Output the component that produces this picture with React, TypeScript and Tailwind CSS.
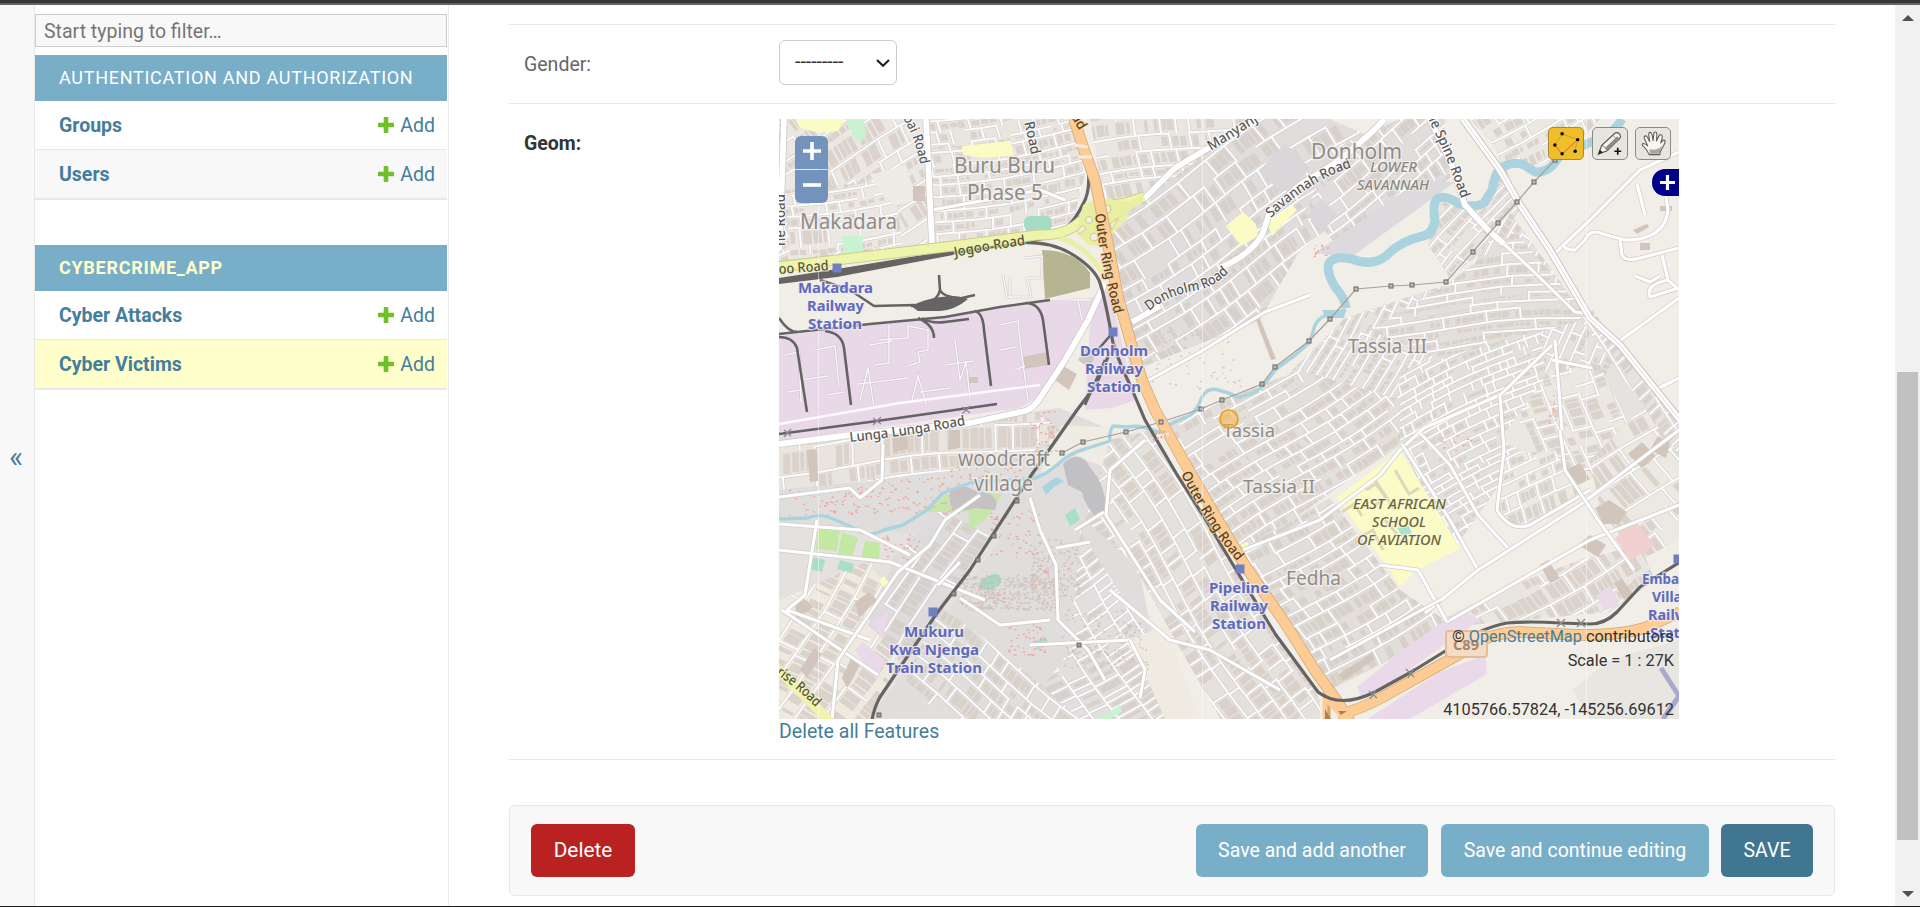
import React from "react";

type Pt = [number, number];

function rng(seed: number) {
  let s = seed;
  return () => {
    s = (s * 1664525 + 1013904223) % 4294967296;
    return s / 4294967296;
  };
}

/* Builds an irregular, slightly curved street grid around a centre point. */
function grid(cx: number, cy: number, angle: number, w: number, h: number, row: number, cell: number, seed: number) {
  const r = rng(seed);
  const a = (angle * Math.PI) / 180;
  const c = Math.cos(a);
  const s = Math.sin(a);
  const p = (x0: number, y0: number) => {
    const x = x0 + 4 * Math.sin(y0 / 31 + seed);
    const y = y0 + 4 * Math.sin(x0 / 43 + seed);
    return `${(cx + x * c - y * s).toFixed(1)} ${(cy + x * s + y * c).toFixed(1)}`;
  };
  let roads = "";
  let houses = "";
  let y = -h / 2;
  while (y < h / 2) {
    const rh = row * (0.7 + r() * 0.7);
    let x = -w / 2;
    while (x < w / 2) {
      const cw = cell * (0.5 + r() * 1.1);
      if (r() > 0.12) roads += `M${p(x, y)}L${p(x + cw, y)}`;
      if (r() > 0.22) roads += `M${p(x, y)}L${p(x, y + rh)}`;
      if (r() > 0.15 && cw > 7) {
        let hx = x + 2.6;
        while (hx < x + cw - 4) {
          const hw = 3 + r() * 6;
          const end = Math.min(hx + hw, x + cw - 2.4);
          const top = y + 2.4 + r() * 1.4;
          const bottom = y + rh - 2.4 - r() * 1.6;
          if (r() > 0.15 && bottom > top) {
            houses += `M${p(hx, top)}L${p(end, top)}L${p(end, bottom)}L${p(hx, bottom)}Z`;
          }
          hx = end + 0.6 + r() * 1.6;
        }
      }
      x += cw;
    }
    y += rh;
  }
  return { roads, houses };
}

interface District {
  id: string;
  area: string;
  fill: string;
  g: [number, number, number, number, number, number, number, number];
}

const districts: District[] = [
  { id: "mak", area: "779,119 925,119 928,248 779,262", fill: "#ebe7e2", g: [850, 190, -30, 280, 260, 16, 36, 3] },
  { id: "mak2", area: "785,190 893,180 903,246 790,256", fill: "#ebe7e2", g: [840, 220, -8, 150, 90, 14, 22, 33] },
  { id: "bur", area: "930,119 1076,119 1086,170 1072,226 1040,234 934,248", fill: "#e9e5e0", g: [1005, 180, -9, 200, 160, 11, 20, 8] },
  { id: "umo", area: "1090,119 1300,119 1140,200 1104,200", fill: "#eae7e3", g: [1170, 160, -8, 260, 110, 14, 21, 12] },
  { id: "don", area: "1255,119 1330,119 1420,158 1300,250 1260,320 1130,372 1108,220 1150,195", fill: "#e0dddc", g: [1240, 240, -34, 420, 330, 15, 26, 22] },
  { id: "don2", area: "1340,145 1400,119 1445,119 1450,178 1346,255 1305,210", fill: "#e0dddc", g: [1385, 180, -38, 200, 160, 12, 23, 9] },
  { id: "ne", area: "1470,119 1600,119 1570,152 1535,166 1502,165 1490,140", fill: "#ece9e3", g: [1530, 130, -28, 180, 100, 12, 22, 2] },
  { id: "spine", area: "1437,200 1480,212 1505,165 1520,210 1490,245 1450,278 1428,245", fill: "#e8e4df", g: [1470, 230, -50, 150, 130, 9, 40, 62] },
  { id: "tas3", area: "1510,212 1660,420 1560,440 1465,360 1395,432 1262,400 1345,318 1460,280", fill: "#e6e2df", g: [1440, 340, -62, 420, 330, 9, 42, 21] },
  { id: "tas3b", area: "1450,282 1515,232 1590,318 1440,360 1370,330", fill: "#e3dfdb", g: [1480, 300, -5, 260, 160, 9, 48, 4] },
  { id: "dense", area: "1400,370 1540,330 1550,405 1510,470 1450,555 1395,430", fill: "#e4e0dc", g: [1470, 430, -25, 260, 250, 8, 15, 17] },
  { id: "tas1", area: "1160,425 1300,370 1400,400 1400,445 1320,500 1240,560 1175,450", fill: "#e3dfdb", g: [1270, 450, -33, 320, 220, 12, 26, 6] },
  { id: "fed", area: "1240,550 1330,498 1400,590 1460,630 1380,665 1330,690", fill: "#e2deda", g: [1340, 600, -32, 260, 220, 14, 25, 7] },
  { id: "pipe", area: "1110,440 1150,430 1320,700 1320,719 1220,719 1130,560 1085,520", fill: "#e5e1dc", g: [1190, 590, 58, 360, 240, 14, 24, 13] },
  { id: "kwen", area: "1080,530 1150,640 1140,660 1175,719 1020,719 1070,650", fill: "#e2dfde", g: [1100, 630, 58, 260, 190, 25, 9, 14] },
  { id: "eleg", area: "1550,370 1600,365 1650,470 1580,480 1500,440", fill: "#ebe8e2", g: [1590, 420, 70, 180, 120, 14, 24, 15] },
  { id: "oval", area: "1505,455 1555,450 1580,490 1560,515 1510,527 1494,510", fill: "#ece9e3", g: [1535, 490, -20, 90, 80, 14, 20, 16] },
  { id: "emb", area: "1590,460 1660,390 1679,410 1679,540 1640,560 1600,510", fill: "#ece8e2", g: [1640, 480, -35, 190, 190, 22, 28, 18] },
  { id: "estr", area: "1580,319 1679,455 1679,420 1592,310", fill: "#e6e2de", g: [1630, 390, 54, 240, 60, 13, 12, 19] },
  { id: "swind", area: "779,600 870,560 910,640 870,719 779,719", fill: "#eeeae0", g: [840, 650, -58, 220, 200, 18, 60, 20] },
  { id: "lun", area: "779,446 1040,412 1060,430 1020,462 880,480 779,490", fill: "#e9e4de", g: [900, 452, -6, 300, 70, 20, 28, 23] },
  { id: "muk", area: "895,555 940,510 990,535 905,660 868,625", fill: "#dddbdc", g: [925, 585, -57, 190, 110, 16, 60, 24] },
  { id: "muk2", area: "940,605 1012,660 1080,719 890,719 915,660", fill: "#e1dedc", g: [990, 670, 38, 230, 130, 13, 24, 25] },
  { id: "indb", area: "1440,620 1500,590 1580,560 1640,545 1655,580 1610,612 1470,625", fill: "#e9e5e0", g: [1540, 600, -30, 240, 90, 17, 30, 26] },
];

const built = districts.map((d) => ({ ...d, ...grid(...d.g) }));

/* Small marks scattered in the informal settlements. */
function specks(boxes: [number, number, number, number, number][], seed: number) {
  const r = rng(seed);
  let d = "";
  boxes.forEach(([x, y, w, h, n]) => {
    for (let i = 0; i < n; i++) {
      const px = x + r() * w;
      const py = y + r() * h;
      d += `M${px.toFixed(1)} ${py.toFixed(1)}l${(1 + r() * 2).toFixed(1)} ${(r() * 2 - 1).toFixed(1)}`;
    }
  });
  return d;
}

const redSpecks = specks(
  [[785, 488, 90, 28, 60], [850, 478, 110, 36, 90], [950, 462, 70, 22, 40], [1030, 412, 25, 40, 34], [880, 535, 40, 26, 30], [990, 510, 50, 50, 50], [960, 585, 60, 20, 20], [1005, 625, 40, 30, 45], [1030, 560, 40, 30, 26], [1312, 243, 15, 14, 12], [1440, 435, 30, 18, 12], [1548, 395, 8, 30, 12]],
  77,
);
const brownSpecks = specks([[960, 575, 95, 35, 420], [1030, 540, 50, 60, 160], [1060, 610, 90, 60, 160], [1150, 330, 90, 60, 50]], 31);

const river =
  "M1622 119Q1616 130 1604 136T1582 146T1560 156L1552 166Q1544 173 1535 172L1524 165Q1512 160 1500 169Q1495 173 1492 190L1484 203Q1474 209 1458 203Q1444 194 1437 199Q1432 204 1435 220Q1433 234 1423 236Q1400 241 1386 256Q1372 267 1352 259Q1335 255 1329 263Q1326 272 1335 287Q1345 298 1346 308";
const stream =
  "M1346 310L1328 314Q1315 319 1313 332L1309 343L1294 356L1276 369L1263 386Q1252 396 1238 397Q1228 392 1218 390Q1208 387 1202 397Q1196 413 1187 417Q1168 424 1158 432Q1140 424 1128 427L1113 426Q1109 431 1110 441L1085 449Q1070 453 1058 464T1032 479Q1000 480 970 483L943 493L927 510L903 525L884 530Q868 538 858 530L838 521Q820 512 808 518L779 519";
const outer = "M1074 119L1084 150L1095 180L1103 220L1111 260L1118 297L1131 343L1142 380L1155 410L1183 460L1216 517L1246 567L1283 620L1316 672L1339 704L1350 722";
const c89 = "M1338 714Q1352 713 1381 698L1449 660Q1467 650 1482 640Q1500 632 1520 632L1580 635Q1625 635 1647 627L1680 612";
const rail =
  "M1076 130L1087 157Q1092 190 1083 204Q1070 232 1047 238L953 253L837 273L779 280M1000 244Q1045 238 1070 253T1100 283T1113 343Q1120 365 1131 387";
const railSE =
  "M1131 387L1145 420L1176 473L1209 525L1238 573L1276 635L1318 692Q1340 709 1375 692L1413 671L1447 650Q1480 628 1507 623Q1530 621 1560 623L1590 624Q1605 624 1617 612L1640 587L1680 562";
const railSW = "M1110 352L1096 385L1077 410L1030 477L970 570L937 613L903 663L880 697Q874 708 872 720";

const whiteRoads = [
  "M1105 283L1088 320L1065 360L1040 398Q1034 408 1025 411L970 423L850 435L779 444",
  "M1132 322L1160 306M1220 268Q1250 255 1262 235L1270 212L1300 185L1340 160L1372 132L1385 119",
  "M1144 199L1175 168L1210 147L1258 119",
  "M926 119L929 180L932 244",
  "M784 119L782 180L779 250",
  "M1430 119L1452 165L1465 205L1490 232L1504 244",
];
const spine = "M1463 119L1500 170L1520 205L1550 250L1590 318L1620 345L1680 420";
const midRoads = [
  "M1504 244L1530 268L1575 312L1590 314",
  "M1552 256L1590 220L1640 170L1679 152",
  "M1618 342L1679 298M1655 390L1679 378",
  "M1140 385L1200 352L1265 312L1310 295",
  "M932 210L1040 190L1065 200",
  "M1243 550L1320 520L1380 475L1400 450L1424 428L1500 395L1552 345",
  "M1402 444L1450 520L1478 570M1420 433L1450 465L1478 515L1508 548",
  "M1425 613L1478 570L1580 505L1679 430M1447 622L1590 540L1679 505",
  "M1380 565L1418 570L1447 622",
  "M1500 395L1504 450L1497 510Q1510 532 1530 525L1590 490",
  "M1560 430L1565 470L1598 520L1634 570",
  "M1555 340L1562 430M1552 360L1592 368",
  "M779 497L850 488L860 498L882 480L883 445",
  "M779 524L860 530L910 555M779 550L890 562L985 600M817 520L805 595L787 610L870 640M782 610L878 675",
  "M980 495L945 520L930 545L898 572L838 660L832 719M938 585L960 562",
  "M1030 498L1040 530L1056 565L1058 620L1088 650L1105 680M960 598L1000 625L1050 620M1056 548L1090 542",
  "M1104 512L1075 530M1106 515L1110 470L1145 440M1106 515L1160 600L1195 632M1030 645L1130 640",
  "M1130 640L1145 670L1140 698",
  "M1603 234Q1590 228 1585 240L1575 250Q1565 250 1564 246M1603 234L1625 240Q1665 240 1668 210L1665 190M1620 240L1622 255Q1625 262 1640 258L1679 248M1637 184L1645 215",
  "M1662 255L1668 280L1679 290M1635 276L1650 282L1660 276M1668 280Q1645 285 1650 297L1679 288",
  "M1110 590L1170 640L1210 650L1280 690",
  "M1330 660L1440 600",
];

const paleBlocks: [string, string][] = [
  ["795,119 845,119 838,131 820,133 800,128", "#fbfbc4"],
  ["845,119 863,119 867,134 861,142 855,139", "#c8f3d1"],
  ["842,236 862,236 863,255 844,256", "#c8f3d1"],
  ["870,175 905,165 915,200 895,206 880,190", "#efece5"],
  ["962,146 1010,141 1014,155 985,158 963,155", "#fbfbc4"],
  ["1226,226 1243,212 1256,224 1258,236 1241,246", "#fbfbc4"],
  ["1267,222 1292,205 1297,210 1272,236", "#fbfbc4"],
  ["1260,170 1285,143 1310,168 1290,190 1280,192", "#d9d7da"],
  ["1308,215 1322,198 1337,215 1322,233", "#d9d7da"],
  ["1315,253 1420,180 1455,182 1350,258", "#dddadd"],
  ["829,528 840,529 837,551 816,549 819,529", "#c3e8a2"],
  ["842,532 858,538 851,560 838,555", "#c3e8a2"],
  ["865,541 880,543 879,560 861,560", "#c3e8a2"],
  ["925,512 945,495 975,490 1002,495 985,520 970,530 968,512", "#c8e6ac"],
  ["811,557 825,560 822,572 809,569", "#a9dfc8"],
  ["840,560 854,564 851,573 837,569", "#a9dfc8"],
  ["1065,515 1075,508 1080,520 1070,526", "#a9dfc8"],
  ["1034,643 1044,636 1048,641 1038,650", "#a9dfc8"],
  ["1098,719 1120,705 1122,711 1110,719", "#c8f3d1"],
  ["1241,544 1248,542 1249,548 1243,550", "#fbfbc4"],
  ["878,580 884,576 890,584 884,587", "#fbfbc4"],
  ["1337,497 1383,463 1400,450 1460,548 1413,573 1400,587 1390,570 1360,530", "#fbfbc6"],
  ["1397,528 1408,525 1412,533 1402,536", "#a9e3cf"],
  ["1615,538 1635,520 1655,546 1630,560", "#f1d0cf"],
  ["1596,596 1610,586 1620,605 1606,610", "#ead9e9"],
  ["1357,687 1410,645 1460,610 1480,620 1380,690 1362,698", "#ead9e9"],
  ["1367,719 1440,672 1485,655 1487,674 1410,719", "#ead9e9"],
  ["872,623 890,610 882,637", "#ead9e9"],
  ["855,650 862,642 885,660 876,680", "#ead9e9"],
  ["1130,640 1165,625 1200,719 1165,719", "#efebe3"],
  ["1572,690 1610,660 1679,640 1679,719 1590,719", "#e8e6e1"],
];

const brownBuildings =
  "M913 186h12v15h-12zM1022 357l25-5 1 13-24 4zM969 377h9v6h-9zM1566 470l14-7 10 16-12 6zM1628 454l14-12 14 14-14 12zM1650 450l8-14 12 8-4 14zM1595 508l14-8 18 12-8 12-16 0zM1540 565l8-5 12 18-10 5zM1578 545l12-10 16 10-8 12zM1614 583l8-4 12 16-10 5zM1256 320l4-1 16 40-5 1zM1338 675l34-22 3 6-32 22zM1640 243h10v7h-10zM1660 206l12 0 0 5-12 0zM1633 230l14-6 2 3-12 7zM807 450l10-1 1 32-8 1zM892 432l14-3 2 20-14 3zM950 430l10 0 0 18-12 2zM855 602l14-10 8 8-18 18zM795 605l10-6 8 8-16 12zM800 670l14-22 8 6-15 24zM842 678l10-22 10 6-15 26zM1055 380l8-14 14 8-8 16zM1078 360l8-12 10 6-7 14z";

const sidings =
  "M779 334L870 324L945 317L1000 307L1050 300M779 318Q788 332 797 332M779 337Q793 337 797 348L807 412M825 331Q842 333 844 348L851 405M918 318Q934 325 934 338M922 318Q932 324 945 322L969 319M975 311Q983 313 984 330L991 386M1025 303Q1040 303 1043 320L1049 365M820 280L850 290L874 306L915 305M911 306Q950 302 962 298L975 295M939 275L940 290Q938 300 927 303M940 290Q943 297 960 298M779 434L877 421L997 404M1105 360L1085 405M1096 352L1115 330";

const serviceRoads =
  "M785 355l14-3 2 50M815 350l20-4 4 40M870 345l22-4M889 325l0 38-14 2M880 340l28-2v-12l20 4v20l-10 2 2 10-12 4M800 380l28-4M860 400l8-32 6 40M912 400l6-24 8 28M955 340l5 40 6-18 4 36M1000 325l18-4 2 20 8 60M1015 370l10-4M1003 275l4 22h24l-4-20M1010 277v22M1024 258l18-2v22h-14M1070 300l20 0M1078 300l4 20M787 392l14-2M828 395l16-3M858 384l50-6M920 392l30-4M1000 350l16-3M945 365l28-4";

interface LabelProps {
  t: string;
  x: number;
  y: number;
  w: number;
  size?: number;
}

function Place({ t, x, y, w, size = 21 }: LabelProps) {
  return (
    <text x={x} y={y} textLength={w} lengthAdjust="spacingAndGlyphs" fontSize={size} fill="#8f8c8b" stroke="#f4f1ec" strokeWidth={3} strokeOpacity={0.75} paintOrder="stroke">
      {t}
    </text>
  );
}

function Station({ t, x, y, w }: LabelProps) {
  return (
    <text x={x} y={y} textLength={w} lengthAdjust="spacingAndGlyphs" fontSize={15} fontWeight={700} fill="#5f6abd" stroke="#f0edf0" strokeWidth={2.5} strokeOpacity={0.8} paintOrder="stroke">
      {t}
    </text>
  );
}

function Area({ t, x, y, w, fill }: LabelProps & { fill: string }) {
  return (
    <text x={x} y={y} textLength={w} lengthAdjust="spacingAndGlyphs" fontSize={14} fontWeight={500} fontStyle="italic" fill={fill} stroke="#f6f4e4" strokeWidth={2} strokeOpacity={0.7} paintOrder="stroke">
      {t}
    </text>
  );
}

const roadNames: { id: string; d: string; t: string; w: number; c?: string; halo?: string }[] = [
  { id: "r1", d: "M955 257Q990 250 1030 244", t: "Jogoo Road", w: 72, c: "#55553a", halo: "#eff3b4" },
  { id: "r2", d: "M1095 214Q1101 265 1116 320", t: "Outer Ring Road", w: 102, c: "#5a421f", halo: "#fbcf9b" },
  { id: "r3", d: "M1181 474Q1206 525 1241 566", t: "Outer Ring Road", w: 104, c: "#5a421f", halo: "#fbcf9b" },
  { id: "r4", d: "M1149 311Q1170 294 1200 290Q1218 285 1234 267", t: "Donholm Road", w: 90 },
  { id: "r5", d: "M1271 218Q1310 180 1356 166", t: "Savannah Road", w: 96 },
  { id: "r6", d: "M1211 151L1268 115", t: "Manyanj", w: 56 },
  { id: "r7", d: "M1425 112L1445 155L1464 206", t: "ole Spine Road", w: 94 },
  { id: "r8", d: "M850 442Q910 436 970 424", t: "Lunga Lunga Road", w: 117 },
  { id: "r9", d: "M776 674Q800 690 824 716", t: "rise Road", w: 52, c: "#55553a", halo: "#eff3b4" },
  { id: "r10", d: "M779 274L832 270", t: "oo Road", w: 50, c: "#55553a", halo: "#eff3b4" },
  { id: "r11", d: "M903 118Q916 140 921 168", t: "oai Road", w: 50 },
  { id: "r12", d: "M1022 112L1032 158", t: "il Road", w: 44 },
  { id: "r13", d: "M785 246L785 190", t: "ne Road", w: 52 },
  { id: "r14", d: "M1067 110L1080 132", t: "oad", w: 24, c: "#5a421f", halo: "#fbcf9b" },
];

const pylons: Pt[] = [[1555, 160], [1534, 182], [1517, 202], [1498, 223], [1473, 252], [1446, 282], [1412, 285], [1391, 286], [1356, 289], [1330, 319], [1309, 341], [1275, 367], [1262, 384], [1222, 400], [1201, 409], [1161, 422], [1126, 432], [1083, 442], [1062, 453]];
const posts: Pt[] = [[1017, 501], [994, 536], [978, 560], [954, 594], [879, 715], [1079, 645]];
const stations: Pt[] = [[837, 268], [1113, 332], [1240, 569], [933, 612], [1678, 559]];

function CityMap() {
  return (
    <svg className="block h-[600px] w-[900px]" viewBox="779 119 900 600" fontFamily="'Noto Sans', 'Open Sans', sans-serif">
      <rect x="779" y="119" width="900" height="600" fill="#f1eee8" />
      <polygon points="779,446 1060,408 1110,430 1170,719 779,719" fill="#e0dddd" />
      <polygon points="779,336 985,311 1052,300 1085,300 1110,290 1135,400 1112,408 1085,410 1090,322 1040,396 1020,408 779,441" fill="#e9d9e8" />
      <polygon points="779,525 1000,540 870,719 779,719" fill="#e4e1df" />
      <polygon points="1062,425 1150,430 1110,470 1075,455 1040,476 1050,440" fill="#efece4" />
      {built.map((d) => (
        <g key={d.id}>
          <clipPath id={`clip-${d.id}`}>
            <polygon points={d.area} />
          </clipPath>
          <g clipPath={`url(#clip-${d.id})`}>
            <polygon points={d.area} fill={d.fill} />
            <path d={d.houses} fill="#d6cdc6" opacity={0.8} />
            <path d={d.roads} stroke="#cdcaca" strokeWidth={3.4} fill="none" opacity={0.75} />
            <path d={d.roads} stroke="#fcfcfc" strokeWidth={2} fill="none" strokeLinecap="round" />
          </g>
        </g>
      ))}
      {paleBlocks.map(([pts, fill]) => (
        <polygon key={pts} points={pts} fill={fill} />
      ))}
      <path d="M1042 250Q1075 250 1090 273V288L1045 299Z" fill="#b5b592" />
      <rect x="1024" y="216" width="28" height="15" rx="6" fill="#a4dcc6" />
      <rect x="980" y="576" width="21" height="13" rx="6" fill="#a4dcc6" transform="rotate(-25 990 582)" />
      <path d="M1063 464Q1075 452 1085 460L1098 478Q1107 495 1105 512L1095 516Q1085 505 1082 492L1068 485Z" fill="#c1c0c2" />
      <path d="M950 490Q965 483 973 490L990 494Q1000 500 995 510L975 508Q958 514 950 505Z" fill="#c5c2c4" />
      <path d="M1342 512l12-8 8 12M1366 490l10-6 10 14-12 8M1355 540l18-10 10 20M1385 520l12 14M1375 480l20 30M1395 470l14 24 10-6" fill="none" stroke="#ddd8bd" strokeWidth="3" />
      <path d={brownBuildings} fill="#d1c5bc" />
      <path d={brownSpecks} stroke="#c9bcb1" strokeWidth="1.5" fill="none" opacity=".7" />
      <path d={redSpecks} stroke="#f0a8a2" strokeWidth="1.4" fill="none" />

      <path d={river} stroke="#aad3df" strokeWidth="9" fill="none" strokeLinejoin="round" />
      <path d={stream} stroke="#aad3df" strokeWidth="3.4" fill="none" strokeLinejoin="round" />
      <path d="M1322 310h24l-2 8h-18zM1042 487l14-10 8 4-10 6-8 8z" fill="#aad3df" />
      <path d={serviceRoads} stroke="#cbc2cb" strokeWidth="2.6" fill="none" />
      <path d={serviceRoads} stroke="#faf7fa" strokeWidth="1.5" fill="none" />
      <path d="M779 424L900 403L1040 385" stroke="#fcfafc" strokeWidth="2.4" fill="none" />
      {midRoads.map((d) => (
        <g key={d} fill="none" strokeLinejoin="round">
          <path d={d} stroke="#d0cdcd" strokeWidth="4.6" />
          <path d={d} stroke="#fff" strokeWidth="3.1" />
        </g>
      ))}
      {whiteRoads.map((d) => (
        <g key={d} fill="none" strokeLinejoin="round">
          <path d={d} stroke="#c9c6c6" strokeWidth="7.2" />
          <path d={d} stroke="#fff" strokeWidth="5.8" />
        </g>
      ))}
      <g fill="none">
        <path d={spine} stroke="#c8c5c5" strokeWidth="8" />
        <path d={spine} stroke="#fff" strokeWidth="6" />
        <path d={spine} stroke="#dcd9d9" strokeWidth="1" />
      </g>

      <path d={`M${pylons.map((p) => p.join(" ")).join("L")}`} fill="none" stroke="#a3a19e" strokeWidth="1.2" />

      <g fill="none" stroke="#656363" strokeLinejoin="round">
        <path d={sidings} strokeWidth="2.6" />
        <path d={rail} strokeWidth="3.2" />
        <path d={railSW} strokeWidth="3.2" />
      </g>
      <path d="M911 306Q925 299 941 297T968 299Q955 310 940 311L918 311Z" fill="#656363" />
      <path d="M779 284L837 277L953 255L953 250L837 269L779 278Z" fill="#656363" />

      <path d="M776 267L837 260L953 246L1037 235Q1060 236 1075 226L1098 208L1125 203L1144 197" stroke="#c9cf8b" strokeWidth="11" fill="none" />
      <path d="M1060 238Q1085 245 1102 272M1078 218Q1090 245 1102 240L1128 215M1086 210L1112 200" stroke="#e9efa4" strokeWidth="5" fill="none" />
      <path d="M776 267L837 260L953 246L1037 235Q1060 236 1075 226L1098 208L1125 203L1144 197" stroke="#eff4ac" strokeWidth="9" fill="none" />
      <path d="M1083 205L1098 198L1130 202L1142 195L1143 202L1125 214L1112 226L1100 246L1088 245L1076 232Z" fill="#e8efa2" />
      <g fill="#f1eee4" stroke="#cbd083" strokeWidth="1">
        <circle cx="1089" cy="220" r="3.5" />
        <circle cx="1107" cy="209" r="4" />
        <circle cx="1094" cy="237" r="4" />
        <path d="M1077 231l6-6 3 4-6 5zM1110 224l8-6-6 12z" />
      </g>
      <path d="M772 664Q800 690 832 724" stroke="#eff4ac" strokeWidth="10" fill="none" />

      <path d={c89} stroke="#d3a670" strokeWidth="11.5" fill="none" />
      <path d={outer} stroke="#d3a670" strokeWidth="11.5" fill="none" />
      <path d="M1327 690V719" stroke="#d3a670" strokeWidth="7" />
      <path d={c89} stroke="#fccc94" strokeWidth="10" fill="none" />
      <path d={outer} stroke="#fccc94" strokeWidth="10" fill="none" />
      <path d="M1325 698V719M1325 698L1345 719" stroke="#fccc94" strokeWidth="5" />
      <path d="M1338 711l9 0-6 4zM1325 719v-10l6 10z" fill="#a88351" />
      <path d={railSE} stroke="#656363" strokeWidth="3.2" fill="none" strokeLinejoin="round" />
      <path d="M1078 157h14M1074 145l14 2M1157 438l12-4" stroke="#f6e9e0" strokeWidth="3" />
      <path d="M1153 440l14-5M1155 434l12-3" stroke="#dba79b" strokeWidth="2" strokeDasharray="2 2" />
      <g stroke="#8d8b8b" strokeWidth="1.4">
        <path d="M1557 619l8 8M1565 619l-8 8M1577 619l8 8M1585 619l-8 8M1406 669l8 8M1414 668l-6 10M1369 691l8 7M1376 690l-6 9M784 430l7 6M791 429l-7 8M873 418l8 6M881 417l-8 8M962 407l8 6M970 406l-8 8" />
      </g>
      <path d="M1661 668L1679 696L1663 719M1679 696V700" stroke="#a9a9cf" strokeWidth="5" fill="none" />

      {pylons.map(([x, y]) => (
        <rect key={`${x}-${y}`} x={x - 2} y={y - 2} width="4" height="4" fill="#bdbbb8" stroke="#6f6d6b" strokeWidth="1.1" />
      ))}
      {posts.map(([x, y]) => (
        <rect key={`${x}-${y}`} x={x - 2} y={y - 2} width="4" height="4" fill="#999" stroke="#6f6d6b" strokeWidth="1" />
      ))}
      {stations.map(([x, y]) => (
        <rect key={`${x}-${y}`} x={x - 4.5} y={y - 4.5} width="9" height="9" fill="#6f7fbf" />
      ))}
      <path d="M818.500 119V719M1202.500 119V719M1586.500 119V719" stroke="#fff" strokeWidth="1" opacity=".45" />

      <rect x="1446" y="631" width="41" height="26" rx="3" fill="#f4dcc4" stroke="#e5bd94" strokeWidth="2" />
      <text x="1453" y="650" fontSize="15" fontWeight="700" fill="#a2876d" textLength="26" lengthAdjust="spacingAndGlyphs">C89</text>

      {roadNames.map((r) => (
        <g key={r.id}>
          <path id={r.id} d={r.d} fill="none" />
          <text fontSize="14" fontWeight="500" fill={r.c ?? "#5a5858"} stroke={r.halo ?? "#fff"} strokeWidth="2.2" strokeOpacity=".75" paintOrder="stroke">
            <textPath href={`#${r.id}`} textLength={r.w} lengthAdjust="spacingAndGlyphs">{r.t}</textPath>
          </text>
        </g>
      ))}

      <Place t="Makadara" x={800} y={229} w={97} />
      <Place t="Buru Buru" x={954} y={173} w={101} />
      <Place t="Phase 5" x={967} y={200} w={76} />
      <Place t="Donholm" x={1311} y={159} w={91} />
      <Place t="woodcraft" x={958} y={466} w={92} />
      <Place t="village" x={974} y={491} w={59} />
      <Place t="Tassia III" x={1348} y={353} w={79} size={20} />
      <Place t="Tassia" x={1223} y={437} w={52} size={18} />
      <Place t="Tassia II" x={1243} y={493} w={72} size={18} />
      <Place t="Fedha" x={1286} y={585} w={55} size={19} />
      <Area t="LOWER" x={1370} y={172} w={47} fill="#8a8888" />
      <Area t="SAVANNAH" x={1357} y={190} w={72} fill="#8a8888" />
      <Area t="EAST AFRICAN" x={1353} y={509} w={93} fill="#6c6834" />
      <Area t="SCHOOL" x={1372} y={527} w={54} fill="#6c6834" />
      <Area t="OF AVIATION" x={1357} y={545} w={84} fill="#6c6834" />
      <Station t="Makadara" x={798} y={293} w={75} />
      <Station t="Railway" x={807} y={311} w={57} />
      <Station t="Station" x={808} y={329} w={54} />
      <Station t="Donholm" x={1080} y={356} w={68} />
      <Station t="Railway" x={1085} y={374} w={58} />
      <Station t="Station" x={1087} y={392} w={54} />
      <Station t="Mukuru" x={904} y={637} w={60} />
      <Station t="Kwa Njenga" x={889} y={655} w={90} />
      <Station t="Train Station" x={886} y={673} w={96} />
      <Station t="Pipeline" x={1209} y={593} w={60} />
      <Station t="Railway" x={1210} y={611} w={58} />
      <Station t="Station" x={1212} y={629} w={54} />
      <Station t="Emba" x={1642} y={584} w={37} />
      <Station t="Villa" x={1652} y={602} w={30} />
      <Station t="Railw" x={1648} y={620} w={39} />
      <Station t="Stat" x={1650} y={638} w={30} />

      <circle cx="1229" cy="419" r="9" fill="#f3b650" fillOpacity=".6" stroke="#e69f1c" strokeWidth="1.6" />
    </svg>
  );
}

function PolygonIcon() {
  return (
    <svg viewBox="0 0 34 32" className="h-full w-full">
      <path d="M13 6L5.500 17.500L13 27L29 12L26 24M13 6L29 12" fill="none" stroke="#a98a2e" strokeWidth=".6" />
      <path d="M5.500 17.500L13 27L29 12" fill="none" stroke="#f0603a" strokeWidth=".8" />
      <g fill="#000">
        <circle cx="13" cy="6" r="1.800" />
        <circle cx="29" cy="12" r="1.800" />
        <circle cx="5.500" cy="17.500" r="1.800" />
        <circle cx="13" cy="26.500" r="1.800" />
        <circle cx="26.500" cy="24" r="1.800" />
      </g>
    </svg>
  );
}

function PencilIcon() {
  return (
    <svg viewBox="0 0 34 32" className="h-full w-full">
      <path d="M5 27L8.500 18L22 5.500Q25 3.500 27.500 7Q28.500 9.500 27 11L14 23.500Z" fill="#f7f7f3" stroke="#55534e" strokeWidth="1.200" />
      <path d="M8.500 18L11 19L14 23.500M20 7.500L25 13" fill="none" stroke="#77756e" strokeWidth=".9" />
      <path d="M14 23.500L27 11L24.500 8.500L12 20.500Z" fill="#8d8b84" />
      <path d="M5 27L6.500 22.500L9.500 25Z" fill="#222" />
      <path d="M21.500 24h7M25 20.500v7" stroke="#111" strokeWidth="1.700" />
    </svg>
  );
}

function HandIcon() {
  return (
    <svg viewBox="0 0 34 32" className="h-full w-full">
      <path d="M13 27.500Q10 21 6.500 18.500Q5 16.500 7 16Q9 16 11.500 18.500L8 10.500Q7.500 8 9.500 8Q11 8.500 13.500 14L12.500 6.500Q12.500 4.500 14.500 4.500Q16 5 17 13L18 5Q18.500 3.500 20.500 4.500Q21.500 6 20.500 13.500L23.500 7.500Q25 6 26.500 8Q27 9 25 15.500L27.500 12.500Q29.500 12 29.500 14Q29 17 26 21.500Q24 25 24 27.500Z" fill="#f7f6f0" stroke="#5c5a54" strokeWidth="1.100" strokeLinejoin="round" />
      <path d="M13.500 26.500h10Q24 22 26.500 18Q21 24 13.500 22Z" fill="#a9a79e" />
    </svg>
  );
}

function AddIcon() {
  return (
    <svg viewBox="0 0 16 16" className="h-4 w-4">
      <path d="M6.500 0h3q.8 0 .8.8v4.900h4.900q.8 0 .8.8v3q0 .8-.8.8h-4.900v4.900q0 .8-.8.8h-3q-.8 0-.8-.8v-4.900H.8q-.8 0-.8-.8v-3q0-.8.8-.8h4.900V.8q0-.8.800-.8z" fill="#70bf2b" />
    </svg>
  );
}

function ModelRow({ name, tone }: { name: string; tone: string }) {
  return (
    <div className={`flex h-12 items-center justify-between pl-6 pr-3 text-[#447e9b] ${tone}`}>
      <a className="pt-0.5 text-[19.5px] font-bold leading-none">{name}</a>
      <a className="flex items-center gap-1.5 text-[19.5px] leading-none">
        <span className="-mt-px"><AddIcon /></span>
        <span className="pt-0.5">Add</span>
      </a>
    </div>
  );
}

function Sidebar() {
  return (
    <nav className="flex w-[414px] shrink-0 flex-col border-r border-[#eaeaea] pr-px pt-[9px]">
      <input
        className="h-[33px] w-full shrink-0 border border-[#ccc] bg-[#f8f8f8] px-2 pt-0.5 text-[19.5px] text-[#333] outline-none placeholder:text-[#757575]"
        placeholder="Start typing to filter…"
      />
      <h2 className="mt-2 flex h-[46px] shrink-0 items-center bg-[#79aec8] pb-0.5 pl-6 text-[18px] tracking-[0.72px] text-white">
        AUTHENTICATION AND AUTHORIZATION
      </h2>
      <ModelRow name="Groups" tone="bg-white" />
      <div className="h-px bg-[#e8e8e8]" />
      <ModelRow name="Users" tone="bg-[#f8f8f8]" />
      <div className="h-0.5 bg-[#e8e8e8]" />
      <h2 className="mt-[45px] flex h-[46px] shrink-0 items-center bg-[#79aec8] pb-0.5 pl-6 text-[18px] font-bold tracking-[0.72px] text-[#ffffcc]">
        CYBERCRIME_APP
      </h2>
      <ModelRow name="Cyber Attacks" tone="bg-white" />
      <div className="h-px bg-[#e8e8e8]" />
      <ModelRow name="Cyber Victims" tone="bg-[#ffffcc]" />
      <div className="h-0.5 bg-[#e8e8e8]" />
    </nav>
  );
}

function MapWidget() {
  return (
    <div className="relative h-[600px] w-[900px] overflow-hidden">
      <CityMap />
      <div className="absolute left-4 top-[17px] flex flex-col gap-px">
        <button className="flex h-[33px] w-[33px] items-center justify-center rounded-t-md bg-[#7392bc] pb-[3px]" aria-label="Zoom in">
          <svg viewBox="0 0 18 18" className="h-[18px] w-[18px]"><path d="M0 9h18M9 0v18" stroke="#fff" strokeWidth="3.600" /></svg>
        </button>
        <button className="flex h-[33px] w-[33px] items-center justify-center rounded-b-md bg-[#7392bc] pb-0.5" aria-label="Zoom out">
          <svg viewBox="0 0 18 18" className="h-[18px] w-[18px]"><path d="M0 8h18" stroke="#fff" strokeWidth="3.600" /></svg>
        </button>
      </div>
      <div className="absolute right-2 top-2 flex">
        <button className="h-[33px] w-9 rounded-[5px] border border-[#a8883a] bg-[#efbe29]" aria-label="Draw"><PolygonIcon /></button>
        <button className="ml-2 h-[33px] w-9 rounded-[5px] border border-[#8c8a85] bg-[#e6e5df]" aria-label="Modify"><PencilIcon /></button>
        <button className="ml-[7px] h-[33px] w-9 rounded-[5px] border border-[#8c8a85] bg-[#e6e5df]" aria-label="Pan"><HandIcon /></button>
      </div>
      <button className="absolute right-0 top-[50px] flex h-[27px] w-[27px] items-center rounded-l-[13px] bg-[#00008b] pl-2" aria-label="Layers">
        <svg viewBox="0 0 15 15" className="h-[15px] w-[15px]"><path d="M0 7.500h15M7.500 0v15" stroke="#fff" strokeWidth="3.200" /></svg>
      </button>
      <div className="absolute right-[5px] top-[506px] flex flex-col items-end text-[16.3px] leading-6 text-[#333]">
        <span>© <a className="text-[#447e9b]">OpenStreetMap</a> contributors</span>
        <span>Scale = 1 : 27K</span>
        <span className="mt-[25px]">4105766.57824, -145256.69612</span>
      </div>
    </div>
  );
}

function SubmitRow() {
  return (
    <div className="mt-[45px] flex h-[91px] items-center rounded-md border border-[#e8e8e8] bg-[#f8f8f8] px-[21px] text-[19.5px] text-white">
      <button className="h-[53px] w-[104px] rounded-md bg-[#ba2121] text-[20.8px]">Delete</button>
      <button className="ml-auto h-[53px] w-[232px] rounded-md bg-[#79aec8]">Save and add another</button>
      <button className="ml-[13px] h-[53px] w-[268px] rounded-md bg-[#79aec8]">Save and continue editing</button>
      <button className="ml-3 h-[53px] w-[92px] rounded-md bg-[#417690]">SAVE</button>
    </div>
  );
}

export default function App() {
  return (
    <div className="flex h-[907px] w-[1920px] flex-col overflow-hidden bg-white font-['Roboto',sans-serif] text-[#333]">
      <div className="h-[5px] shrink-0 border-b-2 border-[#636467] bg-[#35363a]" />
      <div className="flex min-h-0 flex-1">
        <button className="flex w-[35px] shrink-0 items-center justify-center border-r border-[#e8e8e8] bg-[#f8f8f8] pr-0.5 pt-0.5 text-[30px] text-[#447e9b]" aria-label="Toggle navigation">
          «
        </button>
        <Sidebar />
        <main className="flex flex-1 flex-col pl-[60px] pr-[60px] pt-[19px]">
          <section className="border-y border-[#e8e8e8]">
            <div className="flex h-[78px] items-start pl-[15px] pt-[15px]">
              <label className="w-[255px] pt-[13px] text-[19.5px] leading-6 text-[#666]">Gender:</label>
              <div className="flex h-[45px] w-[118px] items-center justify-between rounded-md border border-[#ccc] bg-white pl-[15px] pr-1.5 text-[19.5px]">
                <span className="-mt-0.5">---------</span>
                <svg viewBox="0 0 14 8" className="h-2 w-3.5"><path d="M1 1l6 5.700L13 1" fill="none" stroke="#222" strokeWidth="2.200" /></svg>
              </div>
            </div>
            <div className="flex h-[656px] items-start border-t border-[#e8e8e8] pl-[15px] pt-[15px]">
              <label className="w-[255px] pt-[13px] text-[19.5px] font-bold leading-6 text-[#333]">Geom:</label>
              <div>
                <MapWidget />
                <a className="block text-[19.5px] leading-[25px] text-[#447e9b]">Delete all Features</a>
              </div>
            </div>
          </section>
          <SubmitRow />
        </main>
        <div className="flex w-[25px] shrink-0 flex-col items-center bg-[#f1f1f1]">
          <svg viewBox="0 0 12 6" className="mt-2.5 h-1.5 w-3"><path d="M0 6L6 0L12 6z" fill="#505050" /></svg>
          <div className="mt-[351px] h-[468px] w-[21px] bg-[#c1c1c1]" />
          <svg viewBox="0 0 12 6" className="mt-[51px] h-1.5 w-3"><path d="M0 0L6 6L12 0z" fill="#505050" /></svg>
        </div>
      </div>
      <div className="h-px shrink-0 bg-[#1b1c20]" />
    </div>
  );
}
